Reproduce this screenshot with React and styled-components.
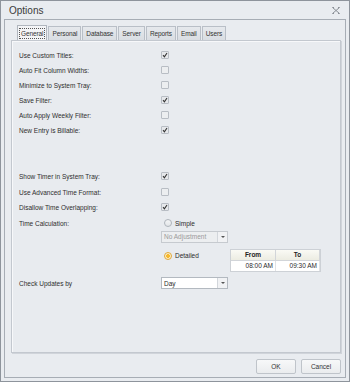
import React from 'react'
import styled, {createGlobalStyle, css} from 'styled-components'

const GlobalStyle = createGlobalStyle`
  html, body { margin: 0; padding: 0; background: #e9ecf0; }
  * { box-sizing: border-box; }
`

const font = `"Liberation Sans", Arial, sans-serif`

const Window = styled.div`
  width: 350px;
  height: 382px;
  border: 1px solid #8e949c;
  background: #e9ecf0;
  display: flex;
  flex-direction: column;
  font-family: ${font};
  color: #2b2b2b;
`

const TitleBar = styled.div`
  height: 18px;
  display: flex;
  align-items: center;
  justify-content: space-between;
  padding: 0 9px 0 8px;
  font-size: 10px;
  color: #3a3a3a;
`

const Frame = styled.div`
  flex: 1;
  margin: 0 3px 3px 3px;
  border: 1px solid #a7adb5;
  display: flex;
  flex-direction: column;
  padding: 5px 3px 0 6px;
`

const TabStrip = styled.div`
  display: flex;
  align-items: flex-end;
  height: 15px;
  padding-left: 6px;
`

const Tab = styled.div`
  height: 14px;
  padding: 0 3px;
  margin-right: 1px;
  display: flex;
  align-items: center;
  font-size: 6.5px;
  letter-spacing: -0.1px;
  color: #333;
  border: 1px solid #b9bfc7;
  border-bottom: none;
  background: linear-gradient(#e6e9ed, #d9dde2);
  ${p => p.active && css`
    height: 15px;
    background: #f4f5f7;
    border-color: #b0b6be;
    span { outline: 1px dotted #555; outline-offset: 1px; }
  `}
`

const Panel = styled.div`
  height: 313px;
  margin-right: 1px;
  border: 1px solid #c3c8cf;
  box-shadow: inset 1px 1px 0 #f7f8fa, 1px 1px 0 #d0d4da;
  background: #e8ebef;
  padding: 7px 0 0 7px;
  display: flex;
  flex-direction: column;
`

const Row = styled.div`
  display: flex;
  align-items: ${p => (p.top ? 'flex-start' : 'center')};
  height: ${p => p.h || 15}px;
  margin-top: ${p => p.gap || 0}px;
`

const Label = styled.div`
  width: 142px;
  font-size: 6.5px;
  color: #2e2e2e;
  ${p => p.top && css`padding-top: 4px;`}
`

const Box = styled.div`
  width: 8px;
  height: 8px;
  border: 1px solid #b8bdc4;
  border-radius: 1px;
  background: ${p => (p.checked ? '#e6e8eb' : '#eceef0')};
  position: relative;
  margin-top: -1px;
  svg { position: absolute; left: 0; top: 0; }
`

const Check = ({checked}) => (
  <Box checked={checked}>
    {checked && (
      <svg width="6" height="6" viewBox="0 0 6 6">
        <path d="M1 3.2 L2.4 4.8 L5 1" fill="none" stroke="#333" strokeWidth="1.1" />
      </svg>
    )}
  </Box>
)

const Controls = styled.div`
  display: flex;
  flex-direction: column;
`

const RadioLine = styled.div`
  display: flex;
  align-items: center;
  gap: 3px;
  padding-left: 3px;
  font-size: 6.5px;
  height: 15px;
`

const Radio = styled.div`
  width: 8px;
  height: 8px;
  border-radius: 50%;
  border: 1px solid ${p => (p.on ? '#e0a93a' : '#aeb4bb')};
  background: ${p => (p.on ? 'radial-gradient(circle, #f7b92e 0 1.6px, #fbeecd 2.2px)' : 'linear-gradient(#f4f5f6, #e2e5e8)')};
`

const Select = styled.div`
  width: 67px;
  height: 12px;
  border: 1px solid ${p => (p.disabled ? '#c6cacf' : '#b3b9c0')};
  background: ${p => (p.disabled ? '#eceef0' : '#fff')};
  display: flex;
  align-items: center;
  font-size: 6.5px;
  color: ${p => (p.disabled ? '#9a9a9a' : '#2b2b2b')};
`

const SelectText = styled.span`
  flex: 1;
  padding-left: 2px;
`

const Arrow = styled.div`
  width: 10px;
  height: 100%;
  border-left: 1px solid #d2d6db;
  background: #f1f2f4;
  display: flex;
  align-items: center;
  justify-content: center;
  &::after {
    content: '';
    border-left: 2px solid transparent;
    border-right: 2px solid transparent;
    border-top: 2px solid #555;
  }
`

const Dropdown = ({value, disabled}) => (
  <Select disabled={disabled}>
    <SelectText>{value}</SelectText>
    <Arrow />
  </Select>
)

const DetailLine = styled.div`
  display: flex;
  align-items: flex-start;
  margin-top: 6px;
`

const DetailRadio = styled(RadioLine)`
  width: 69px;
  height: 12px;
  margin-top: 1px;
`

const Table = styled.div`
  display: grid;
  grid-template-columns: 45px 44px;
  border: 1px solid #cdd1d6;
  font-size: 6.5px;
`

const Head = styled.div`
  height: 11px;
  background: linear-gradient(#fafaf5, #ecece2);
  border-right: 1px solid #d2d5d9;
  border-bottom: 1px solid #d2d5d9;
  font-weight: bold;
  display: flex;
  align-items: center;
  justify-content: center;
  color: #222;
`

const Cell = styled.div`
  height: 10px;
  background: #fff;
  border-right: 1px solid #e0e2e5;
  display: flex;
  align-items: center;
  justify-content: flex-end;
  padding-right: 2px;
`

const Footer = styled.div`
  display: flex;
  justify-content: flex-end;
  gap: 5px;
  padding: 6px 1px 0 0;
`

const Button = styled.div`
  width: 40px;
  height: 15px;
  border: 1px solid #bfc4ca;
  border-radius: 2px;
  background: linear-gradient(#f7f8f9, #eaecee);
  font-size: 6.5px;
  display: flex;
  align-items: center;
  justify-content: center;
  color: #333;
`

const Close = () => (
  <svg width="8" height="7" viewBox="0 0 8 7">
    <path d="M0.5 0.5 L7.5 6.5 M7.5 0.5 L0.5 6.5 M0.5 0.5 H2 M6 0.5 H7.5 M0.5 6.5 H2 M6 6.5 H7.5" stroke="#8a8f96" strokeWidth="1" fill="none" />
  </svg>
)

const first = [
  ['Use Custom Titles:', true],
  ['Auto Fit Column Widths:', false],
  ['Minimize to System Tray:', false],
  ['Save Filter:', true],
  ['Auto Apply Weekly Filter:', false],
  ['New Entry is Billable:', true],
]

const second = [
  ['Show Timer in System Tray:', true],
  ['Use Advanced Time Format:', false],
  ['Disallow Time Overlapping:', true],
]

const tabs = ['General', 'Personal', 'Database', 'Server', 'Reports', 'Email', 'Users']

export default function App() {
  return (
    <>
      <GlobalStyle />
      <Window>
        <TitleBar>
          <span>Options</span>
          <Close />
        </TitleBar>
        <Frame>
          <TabStrip>
            {tabs.map((t, i) => (
              <Tab key={t} active={i === 0}><span>{t}</span></Tab>
            ))}
          </TabStrip>
          <Panel>
            {first.map(([l, c]) => (
              <Row key={l}><Label>{l}</Label><Check checked={c} /></Row>
            ))}
            {second.map(([l, c], i) => (
              <Row key={l} h={15.5} gap={i === 0 ? 31 : 0}><Label>{l}</Label><Check checked={c} /></Row>
            ))}
            <Row top h={61}>
              <Label top>Time Calculation:</Label>
              <Controls>
                <RadioLine><Radio />Simple</RadioLine>
                <Dropdown value="No Adjustment" disabled />
                <DetailLine>
                  <DetailRadio><Radio on />Detailed</DetailRadio>
                  <Table>
                    <Head>From</Head>
                    <Head>To</Head>
                    <Cell>08:00 AM</Cell>
                    <Cell>09:30 AM</Cell>
                  </Table>
                </DetailLine>
              </Controls>
            </Row>
            <Row h={13}>
              <Label>Check Updates by</Label>
              <Dropdown value="Day" />
            </Row>
          </Panel>
          <Footer>
            <Button>OK</Button>
            <Button>Cancel</Button>
          </Footer>
        </Frame>
      </Window>
    </>
  )
}
